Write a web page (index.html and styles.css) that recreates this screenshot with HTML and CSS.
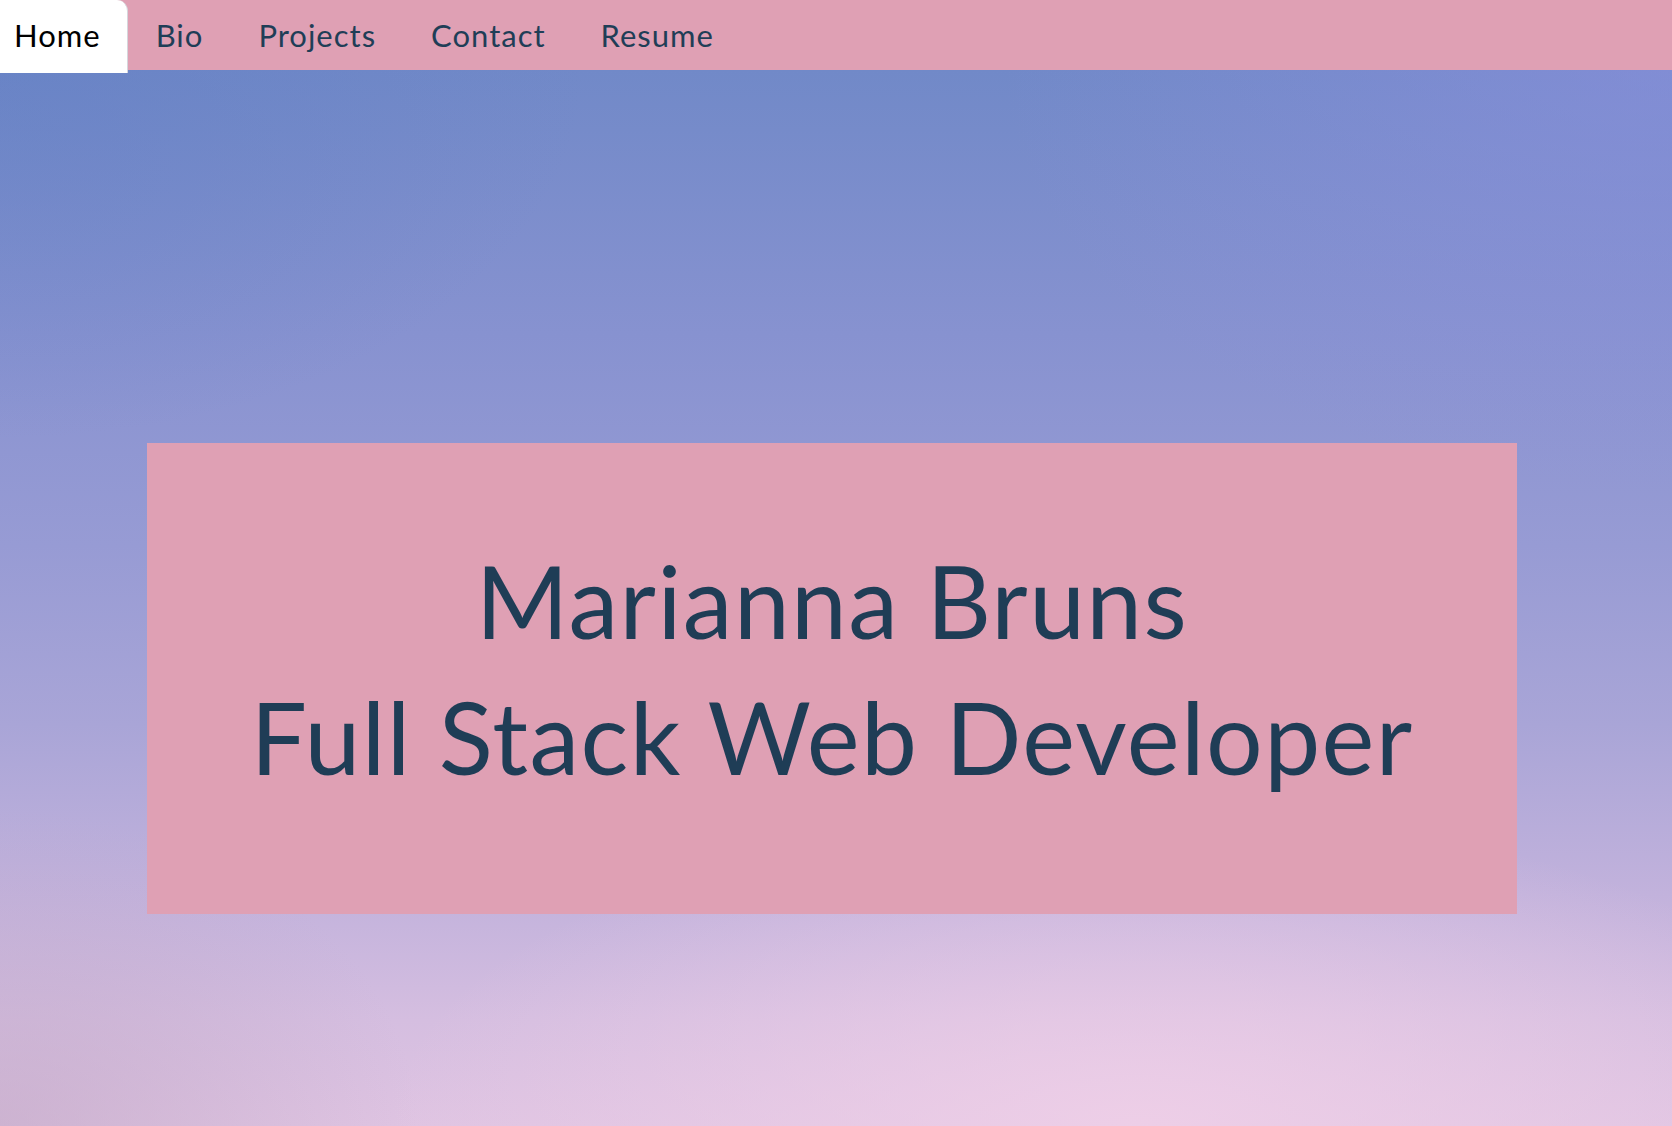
FILE: index.html
```html
<!DOCTYPE html>
<html lang="en">
<head>
<meta charset="utf-8">
<title>Marianna Bruns</title>
<link rel="stylesheet" href="styles.css">
</head>
<body>
<nav class="topnav">
  <ul class="tabs">
    <li class="tab active"><a href="#">Home</a></li>
    <li class="tab"><a href="#">Bio</a></li>
    <li class="tab"><a href="#">Projects</a></li>
    <li class="tab"><a href="#">Contact</a></li>
    <li class="tab"><a href="#">Resume</a></li>
  </ul>
</nav>
<main class="hero">
  <section class="card">
    <h1 class="title">Marianna Bruns<br>Full Stack Web Developer</h1>
  </section>
</main>
</body>
</html>
```

FILE: styles.css
```css
* { box-sizing: border-box; }
html, body { margin: 0; padding: 0; height: 100%; }
body {
  font-family: Lato, "Noto Sans", sans-serif;
  background: #8c94d0;
  overflow: hidden;
}
.topnav {
  background: #dfa0b4;
  height: 70px;
  position: relative;
  z-index: 2;
}
.tabs {
  list-style: none;
  margin: 0;
  padding: 0;
  display: flex;
  height: 70px;
  align-items: flex-start;
}
.tab a {
  display: block;
  height: 70px;
  line-height: 70px;
  padding: 0 27px 0 28px;
  font-size: 31px;
  letter-spacing: 1px;
  color: #1f3e57;
  text-decoration: none;
}
.tab.active a {
  background: #fff;
  color: #000;
  height: 73px;
  padding: 0 26px 0 14px;
  border-top-right-radius: 11px;
  border-right: 1px solid #d6d6dc;
}
.hero {
  height: calc(100% - 70px);
  padding: 373px 155px 0 147px;
  background:
    radial-gradient(ellipse 45% 30% at 68% 100%, rgba(240, 208, 232, 0.85), rgba(240, 208, 232, 0) 100%),
    radial-gradient(ellipse 25% 30% at 0% 100%, rgba(190, 165, 195, 0.55), rgba(190, 165, 195, 0) 100%),
    radial-gradient(ellipse 40% 40% at 100% 0%, rgba(145, 145, 225, 0.5), rgba(145, 145, 225, 0) 100%),
    radial-gradient(ellipse 35% 35% at 0% 0%, rgba(95, 125, 195, 0.45), rgba(95, 125, 195, 0) 100%),
    linear-gradient(to bottom, #7189c8 0%, #8792d0 25%, #979bd4 45%, #a9a5d7 62%, #c2b2dc 78%, #d5bee0 90%, #dfc4e2 100%);
}
.card {
  background: #dfa0b4;
  height: 471px;
  padding-top: 89px;
  text-align: center;
}
.title {
  margin: 0;
  font-weight: 400;
  font-size: 100px;
  line-height: 136px;
  letter-spacing: 1.4px;
  color: #1f3d56;
}
```
